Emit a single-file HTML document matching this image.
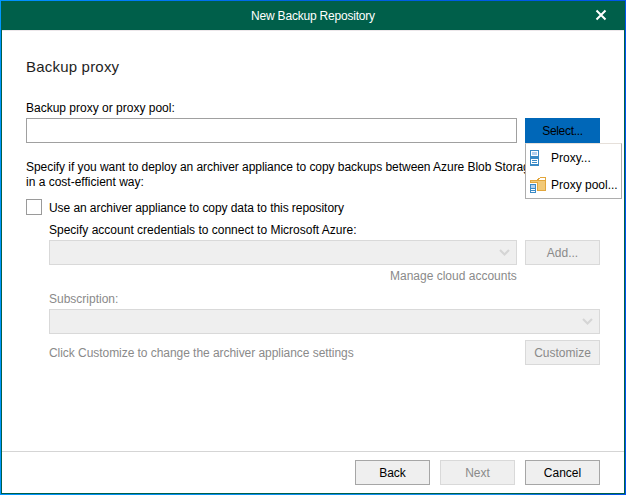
<!DOCTYPE html>
<html><head><meta charset="utf-8">
<style>
html,body{margin:0;padding:0;}
body{width:626px;height:495px;overflow:hidden;position:relative;background:#fff;font-family:"Liberation Sans",sans-serif;font-size:12px;color:#000;}
.a{position:absolute;}
.t{position:absolute;white-space:nowrap;line-height:14px;height:14px;font-size:12px;}
.g{color:#8a8a8a;}
#outer{left:0;top:0;width:626px;height:495px;background:linear-gradient(to right,#00a0ff 0%,#0070f0 45%,#0052ec 100%);}
#inner{left:1px;top:1px;width:624px;height:493px;background:#005f4a;}
#client{left:2px;top:30px;width:622px;height:463px;background:#fff;}
.btn{position:absolute;box-sizing:border-box;height:25px;width:75px;background:#efefef;border:1px solid #a6a6a6;}
.dis{border-color:#d9d9d9;}
.combo{position:absolute;box-sizing:border-box;height:25px;background:#efefef;border:1px solid #d9d9d9;}
.bt{position:absolute;left:0;right:0;top:5px;text-align:center;line-height:14px;white-space:nowrap;}
</style></head><body>
<div id="outer" class="a"></div>
<div class="a" style="left:0;top:0;width:626px;height:1px;background:linear-gradient(to right,#0095ff 0,#0080ff 100px,#0062e2 300px,#0055ea 626px);"></div>
<div class="a" style="left:0;top:0;width:1px;height:495px;background:#0097ff;"></div>
<div class="a" style="left:625px;top:0;width:1px;height:495px;background:#0055ee;"></div>
<div class="a" style="left:0;top:494px;width:626px;height:1px;background:linear-gradient(to right,#0095ff 0,#0090f0 100px,#1a8ff0 500px,#0052d4 590px,#0055ee 626px);"></div>
<div id="inner" class="a"></div>
<div id="client" class="a" style="left:2px;top:30px;width:622px;height:463px;"></div>

<div class="a" style="left:2px;top:30px;width:622px;height:1px;background:#ece7ea;"></div>
<!-- title -->
<div class="t" style="left:0;width:626px;text-align:center;top:9px;color:#fff;letter-spacing:-0.2px;">New Backup Repository</div>
<svg class="a" style="left:595px;top:9px" width="12" height="12" viewBox="0 0 12 12"><path d="M1.5 1.5L10.5 10.5M10.5 1.5L1.5 10.5" stroke="#fff" stroke-width="2" fill="none"/></svg>

<!-- heading -->
<div class="t" style="left:26px;top:58px;font-size:15px;line-height:17px;height:17px;color:#1e1e1e;letter-spacing:0.2px;">Backup proxy</div>

<div class="t" style="left:26px;top:101px;">Backup proxy or proxy pool:</div>
<div class="a" style="left:26px;top:118px;width:491px;height:25px;box-sizing:border-box;border:1px solid #a0a0a0;background:#fff;"></div>

<div class="a" style="left:525px;top:118px;width:75px;height:25px;background:#0067b8;"></div>
<div class="t" style="left:525px;width:75px;text-align:center;top:124px;letter-spacing:-0.3px;">Select...</div>

<div class="t" style="left:26px;top:160px;letter-spacing:-0.05px;">Specify if you want to deploy an archiver appliance to copy backups between Azure Blob Storage</div>
<div class="t" style="left:26px;top:175px;">in a cost-efficient way:</div>

<div class="a" style="left:26px;top:199px;width:16px;height:16px;box-sizing:border-box;border:1px solid #9a9a9a;background:#fff;"></div>
<div class="t" style="left:49px;top:201px;letter-spacing:-0.07px;">Use an archiver appliance to copy data to this repository</div>

<div class="t" style="left:49px;top:223px;">Specify account credentials to connect to Microsoft Azure:</div>
<div class="combo" style="left:49px;top:240px;width:468px;"></div>
<svg class="a" style="left:499px;top:248px" width="11" height="9" viewBox="0 0 11 9"><path d="M1 2L5.5 6.5L10 2" stroke="#d5d5d5" stroke-width="2.1" fill="none"/></svg>
<div class="btn dis" style="left:525px;top:240px;"><div class="bt g">Add...</div></div>
<div class="t g" style="left:390px;top:269px;">Manage cloud accounts</div>

<div class="t g" style="left:49px;top:292px;">Subscription:</div>
<div class="combo" style="left:49px;top:309px;width:551px;"></div>
<svg class="a" style="left:582px;top:317px" width="11" height="9" viewBox="0 0 11 9"><path d="M1 2L5.5 6.5L10 2" stroke="#d5d5d5" stroke-width="2.1" fill="none"/></svg>

<div class="t g" style="left:49px;top:346px;letter-spacing:-0.05px;">Click Customize to change the archiver appliance settings</div>
<div class="btn dis" style="left:525px;top:340px;"><div class="bt g">Customize</div></div>

<!-- footer -->
<div class="a" style="left:2px;top:451px;width:622px;height:1px;background:#d5d5d5;"></div>
<div class="btn" style="left:355px;top:460px;"><div class="bt">Back</div></div>
<div class="btn dis" style="left:440px;top:460px;"><div class="bt g">Next</div></div>
<div class="btn" style="left:525px;top:460px;"><div class="bt">Cancel</div></div>

<!-- dropdown menu -->
<div class="a" style="left:525px;top:143px;width:97px;height:56px;box-sizing:border-box;border:1px solid #adadad;border-top-color:#e6e0da;background:#fff;"></div>
<svg class="a" style="left:530px;top:150px" width="9" height="16" viewBox="0 0 9 16" shape-rendering="crispEdges">
<rect x="0" y="0" width="9" height="16" fill="#3a8ac6"/>
<rect x="1" y="1" width="7" height="5" fill="#fff"/>
<rect x="2" y="2" width="5" height="3" fill="#b3cfee"/>
<rect x="1" y="9" width="7" height="5" fill="#fff"/>
<rect x="2" y="10" width="5" height="1" fill="#3a8ac6"/>
<rect x="2" y="12" width="5" height="1" fill="#3a8ac6"/>
</svg>
<div class="t" style="left:551px;top:151px;">Proxy...</div>

<svg class="a" style="left:530px;top:177px" width="16" height="16" viewBox="0 0 16 16" shape-rendering="crispEdges">
<rect x="10" y="0" width="6" height="1" fill="#e2a63c"/>
<rect x="8" y="1" width="2" height="1" fill="#e2a63c"/>
<rect x="7" y="2" width="2" height="1" fill="#e2a63c"/>
<rect x="15" y="0" width="1" height="14" fill="#e2a63c"/>
<rect x="0" y="3" width="16" height="1" fill="#e2a63c"/>
<rect x="0" y="4" width="7" height="1" fill="#f0c878"/>
<rect x="0" y="3" width="1" height="3" fill="#e2a63c"/>
<rect x="1" y="5" width="6" height="1" fill="#e2a63c"/>
<rect x="7" y="4" width="8" height="9" fill="#f1c978"/>
<rect x="7" y="5" width="1" height="9" fill="#e2a63c"/>
<rect x="7" y="13" width="9" height="1" fill="#e2a63c"/>
<rect x="0" y="7" width="6" height="9" fill="#3a8ac6"/>
<rect x="1" y="8" width="4" height="3" fill="#b3cfee"/>
<rect x="1" y="12" width="4" height="1" fill="#fff"/>
<rect x="1" y="14" width="4" height="1" fill="#fff"/>
</svg>
<div class="t" style="left:551px;top:178px;">Proxy pool...</div>

</body></html>
